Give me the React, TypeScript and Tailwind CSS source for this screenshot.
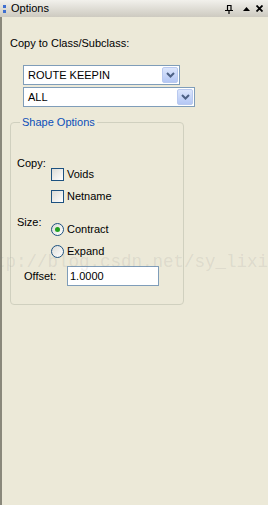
import React from "react";

function Chevron() {
  return (
    <svg width="9" height="6" viewBox="0 0 9 6">
      <path d="M1 1 L4.5 4.5 L8 1" fill="none" stroke="#4d6185" strokeWidth="2" />
    </svg>
  );
}

function Combo({ text, width }: { text: string; width: string }) {
  return (
    <div className={`flex h-[20px] items-center border border-[#7f9db9] bg-white ${width}`}>
      <span className="flex-1 truncate pl-[4px] text-[11px] leading-none text-black">{text}</span>
      <div className="mr-[1px] flex h-[16px] w-[16px] items-center justify-center rounded-[2px] border border-[#b9c9ef] bg-gradient-to-b from-[#dce6fc] to-[#b4c7f4]">
        <Chevron />
      </div>
    </div>
  );
}

function Check({ label }: { label: string }) {
  return (
    <div className="flex h-[13px] items-center gap-[3px]">
      <div className="h-[13px] w-[13px] border border-[#1c5180] bg-gradient-to-br from-[#dcdcd7] to-white" />
      <span className="text-[11px] leading-none">{label}</span>
    </div>
  );
}

function Radio({ label, checked }: { label: string; checked?: boolean }) {
  return (
    <div className="flex h-[13px] items-center gap-[3px]">
      <div className="flex h-[13px] w-[13px] items-center justify-center rounded-full border border-[#1c5180] bg-gradient-to-br from-[#dcdcd7] to-white">
        {checked && <div className="h-[5px] w-[5px] rounded-full bg-[#21a121]" />}
      </div>
      <span className="text-[11px] leading-none">{label}</span>
    </div>
  );
}

export default function App() {
  return (
    <div
      className="relative h-[505px] w-[268px] overflow-hidden bg-[#ece9d8] text-black"
      style={{ fontFamily: '"Liberation Sans", Arial, sans-serif' }}
    >
      {/* title bar */}
      <div className="flex h-[17px] items-center bg-gradient-to-b from-[#f2f1ec] to-[#cdcac0] pl-[3px] pr-[5px]">
        <div className="flex flex-col gap-[2px]">
          <div className="h-[3px] w-[3px] bg-[#3f6fd0]" />
          <div className="h-[3px] w-[3px] bg-[#3f6fd0]" />
        </div>
        <span className="ml-[5px] flex-1 text-[11px] leading-none">Options</span>
        <svg width="8" height="9" viewBox="0 0 8 9" className="mr-[10px] mt-[2px]">
          <path d="M2 0.5 H6 V5 M2.5 0.5 V5 M0 5.5 H8 M4 5.5 V9" fill="none" stroke="#000" strokeWidth="1.2" />
        </svg>
        <svg width="7" height="4" viewBox="0 0 7 4" className="mr-[6px]">
          <path d="M0 4 L3.5 0 L7 4 Z" fill="#000" />
        </svg>
        <svg width="7" height="7" viewBox="0 0 7 7">
          <path d="M0.5 0.5 L6.5 6.5 M6.5 0.5 L0.5 6.5" stroke="#000" strokeWidth="1.8" />
        </svg>
      </div>

      <div className="flex h-[488px] flex-col border-l-2 border-[#8a887b] pl-[8px]">
        <div className="mt-[21px] text-[11px] leading-none">Copy to Class/Subclass:</div>

        <div className="mt-[16px] flex flex-col gap-[2px] pl-[13px]">
          <Combo text="ROUTE KEEPIN" width="w-[157px]" />
          <Combo text="ALL" width="w-[172px]" />
        </div>

        <fieldset className="mt-[9px] h-[189px] w-[174px] rounded-[4px] border border-[#d0d0bf] pl-[6px]">
          <legend className="ml-[3px] px-[2px] text-[11px] leading-[13px] text-[#0b4fb8]">Shape Options</legend>

          <div className="mt-[29px] flex">
            <span className="w-[34px] text-[11px] leading-none">Copy:</span>
            <div className="mt-[10px] flex flex-col gap-[9px]">
              <Check label="Voids" />
              <Check label="Netname" />
            </div>
          </div>

          <div className="mt-[14px] flex">
            <span className="w-[34px] text-[11px] leading-none">Size:</span>
            <div className="mt-[6px] flex flex-col gap-[9px]">
              <Radio label="Contract" checked />
              <Radio label="Expand" />
            </div>
          </div>

          <div className="mt-[8px] flex items-center">
            <span className="w-[50px] pl-[7px] text-[11px] leading-none">Offset:</span>
            <div className="flex h-[20px] w-[92px] items-center border border-[#7f9db9] bg-white pl-[2px] text-[11px]">
              1.0000
            </div>
          </div>
        </fieldset>
      </div>

      {/* watermark */}
      <div
        className="pointer-events-none absolute left-[-26px] top-[254px] whitespace-nowrap text-[17.5px] leading-none text-[rgba(128,128,128,0.15)]"
        style={{ fontFamily: '"Liberation Mono", monospace' }}
      >
        http://blog.csdn.net/sy_lixi
      </div>
    </div>
  );
}
